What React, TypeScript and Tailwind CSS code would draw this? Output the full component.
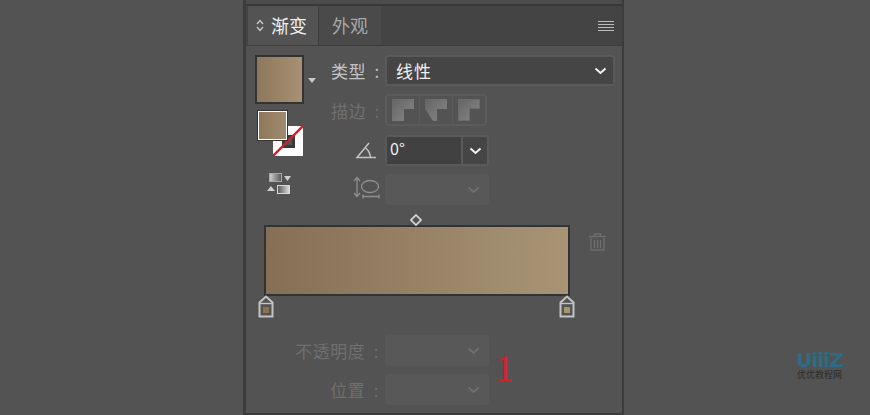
const chevron = "M1 1.5 L6 6 L11 1.5";

function Chevron({ dim }: { dim?: boolean }) {
  return (
    <svg width="13" height="8" viewBox="0 0 12 8" fill="none">
      <path d={chevron} stroke={dim ? "#6f6f6f" : "#f2f2f2"} strokeWidth="2" />
    </svg>
  );
}

function Stop({ color }: { color: string }) {
  return (
    <svg width="16" height="23" viewBox="0 0 16 23" fill="none">
      <path d="M1.5 21.5 V7.5 L8 1.5 L14.5 7.5 V21.5 Z" stroke="#c4c4c4" strokeWidth="2" fill="#535353" />
      <path d="M1.5 8.5 H14.5" stroke="#c4c4c4" strokeWidth="1.4" />
      <rect x="5" y="12" width="6" height="6" fill={color} />
    </svg>
  );
}

function JoinIcon({ kind }: { kind: number }) {
  const id = `join${kind}`;
  return (
    <svg width="28" height="24" viewBox="0 0 28 24">
      <defs>
        <linearGradient id={id} x1="0" y1="0" x2="1" y2="1">
          <stop offset="0" stopColor="#646464" />
          <stop offset="0.6" stopColor="#7a7a7a" />
          <stop offset="1" stopColor="#858585" />
        </linearGradient>
      </defs>
      {kind === 0 && <path d="M3 1 H25 V11 H15 V23 H3 Z" fill={`url(#${id})`} />}
      {kind === 1 && <path d="M3 1 H25 V11 H15 V23 H11 L3 11 Z" fill={`url(#${id})`} />}
      {kind === 2 && (
        <path d="M3.5 1.5 H24.5 V10.5 H14.5 V22.5 H3.5 Z" fill={`url(#${id})`} stroke="#6c6c6c" strokeWidth="1" />
      )}
    </svg>
  );
}

function Label({ text, dim, className }: { text: string; dim?: boolean; className?: string }) {
  return (
    <span className={`whitespace-pre text-[17px] leading-none tracking-[0.5px] ${dim ? "text-[#6f6f6f]" : "text-[#c4c4c4]"} ${className ?? ""}`}>
      {text}
    </span>
  );
}

export default function App() {
  return (
    <div className="relative flex h-[415px] w-[870px] overflow-hidden bg-[#535353] pl-[243px] font-['Noto_Sans_CJK_SC','Liberation_Sans',sans-serif]">
      <div className="flex h-full w-[381px] flex-col border-r-2 border-b-2 border-l-[3px] border-[#3c3c3c] bg-[#535353]">
        <div className="h-[6px] border-b-2 border-[#383838] bg-[#4c4c4c]" />

        {/* tabs */}
        <div className="flex h-[40px] border-b border-[#3d3d3d] bg-[#444444]">
          <div className="ml-[2px] flex w-[71px] items-center gap-[7px] border-r border-[#3d3d3d] bg-[#535353] pl-2 text-[18px] text-[#efefef]">
            <svg width="8" height="13" viewBox="0 0 8 13" fill="none" stroke="#c8c8c8" strokeWidth="1.4">
              <path d="M1 5 L4 1.5 L7 5" />
              <path d="M1 8 L4 11.5 L7 8" />
            </svg>
            <span>渐变</span>
          </div>
          <div className="flex w-[62px] items-center justify-center bg-[#4a4a4a] text-[18px] text-[#a6a6a6]">外观</div>
          <div className="ml-auto flex items-center pr-[8px]">
            <svg width="16" height="12" viewBox="0 0 16 12" stroke="#bdbdbd" strokeWidth="1">
              <path d="M0 1.5 H16 M0 4.5 H16 M0 7.5 H16 M0 10.5 H16" />
            </svg>
          </div>
        </div>

        <div className="flex pt-[9px] pl-[9px]">
          {/* swatches */}
          <div className="flex w-[76px] flex-col">
            <div className="flex items-center">
              <div className="h-[49px] w-[49px] border-2 border-[#333333] bg-gradient-to-r from-[#8d785c] to-[#a69174]" />
              <svg className="ml-[4px] mt-[1px]" width="8" height="5" viewBox="0 0 8 5">
                <path d="M0 0 H8 L4 5 Z" fill="#c8c8c8" />
              </svg>
            </div>
            <div className="relative ml-[3px] mt-[7px] h-[45px] w-[47px]">
              <div className="absolute left-[15px] top-[15px] flex h-[30px] w-[30px] items-center justify-center bg-white">
                <div className="h-[13px] w-[13px] border-[3px] border-[#3a3a3a] bg-[#535353]" />
                <svg className="absolute inset-0" width="30" height="30" viewBox="0 0 30 30">
                  <path d="M0 30 L30 0" stroke="#d0202a" strokeWidth="2.4" />
                </svg>
              </div>
              <div className="absolute left-0 top-0 h-[29px] w-[29px] border border-white bg-gradient-to-r from-[#8d785c] to-[#a08b6e] outline outline-[#333333]" />
            </div>
            <svg className="ml-[12px] mt-[16px]" width="25" height="23" viewBox="0 0 25 23">
              <defs>
                <linearGradient id="swapA" x1="0" x2="1">
                  <stop offset="0" stopColor="#d0d0d0" />
                  <stop offset="1" stopColor="#555555" />
                </linearGradient>
                <linearGradient id="swapB" x1="0" x2="1">
                  <stop offset="0" stopColor="#555555" />
                  <stop offset="1" stopColor="#e0e0e0" />
                </linearGradient>
              </defs>
              <rect x="2.5" y="1.5" width="12" height="8" fill="url(#swapA)" stroke="#a8a8a8" />
              <rect x="10.5" y="13.5" width="12" height="8" fill="url(#swapB)" stroke="#d8d8d8" />
              <path d="M17 4 H24 L20.5 9 Z M0 19 H8 L4 14 Z" fill="#cfcfcf" />
            </svg>
          </div>

          {/* controls */}
          <div className="flex flex-col">
            <div className="flex h-[31px] items-center">
              <Label text="类型  :" className="w-[54px]" />
              <div className="flex h-[31px] w-[230px] items-center rounded-[3px] border-2 border-[#5a5a5a] bg-[#454545] pr-[6px] pl-[9px] text-[17px] leading-none text-[#f0f0f0]">
                <span className="tracking-[1px]">线性</span>
                <span className="ml-auto flex">
                  <Chevron />
                </span>
              </div>
            </div>

            <div className="mt-[8px] flex h-[32px] items-center">
              <Label text="描边  :" dim className="w-[54px]" />
              <div className="flex h-[32px] w-[102px] rounded-[3px] border-2 border-[#5b5b5b]">
                <div className="flex flex-1 items-center justify-center border-r border-[#5b5b5b]">
                  <JoinIcon kind={0} />
                </div>
                <div className="flex flex-1 items-center justify-center border-r border-[#5b5b5b]">
                  <JoinIcon kind={1} />
                </div>
                <div className="flex flex-1 items-center justify-center">
                  <JoinIcon kind={2} />
                </div>
              </div>
            </div>

            <div className="mt-[9px] flex h-[31px] items-center">
              <div className="flex w-[54px] justify-end pr-[8px]">
                <svg width="22" height="17" viewBox="0 0 22 17" fill="none" stroke="#c4c4c4" strokeWidth="1.5">
                  <path d="M14 1 L2 15.5 H21" />
                  <path d="M10.5 6 Q15 9.5 15.5 15.5" />
                </svg>
              </div>
              <div className="flex h-[31px] w-[104px] rounded-[3px] border-2 border-[#5a5a5a] bg-[#454545]">
                <div className="w-[76px] border-r-2 border-[#5a5a5a] bg-[#414141] pl-[3px] pt-[1px] text-[16px] leading-[20px] text-[#eeeeee]">0°</div>
                <div className="flex flex-1 items-center justify-center">
                  <Chevron />
                </div>
              </div>
            </div>

            <div className="mt-[8px] flex h-[31px] items-center">
              <div className="mb-[4px] flex w-[54px] justify-end pr-[5px]">
                <svg width="27" height="23" viewBox="0 0 27 23" fill="none" stroke="#8f8f8f" strokeWidth="1.3">
                  <path d="M4 2 V20 M1 5 L4 1.5 L7 5 M1 17 L4 20.5 L7 17" />
                  <ellipse cx="17" cy="10.5" rx="8.5" ry="6" />
                  <path d="M10 20.5 H26 M10 18.5 V22.5 M26 18.5 V22.5" />
                </svg>
              </div>
              <div className="flex h-[31px] w-[104px] items-center justify-end rounded-[3px] bg-[#585858] pr-[9px]">
                <Chevron dim />
              </div>
            </div>
          </div>
        </div>

        {/* gradient slider */}
        <div className="relative mt-[20px] flex pl-[18px]">
          <div className="relative h-[71px] w-[306px] border-2 border-[#333333] bg-gradient-to-r from-[#857056] to-[#a89475]">
            <svg className="absolute left-[144px] top-[-13px]" width="12" height="12" viewBox="0 0 12 12" fill="none">
              <path d="M6 1 L11 6 L6 11 L1 6 Z" stroke="#dcdcdc" strokeWidth="1.6" />
            </svg>
            <div className="absolute left-[-8px] top-[68px] flex">
              <Stop color="#8b6f52" />
            </div>
            <div className="absolute right-[-7px] top-[68px] flex">
              <Stop color="#a89475" />
            </div>
          </div>
          <svg className="ml-[19px] mt-[8px]" width="17" height="18" viewBox="0 0 17 18" fill="none" stroke="#6e6e6e" strokeWidth="1.3">
            <path d="M0 3.5 H17 M5.5 3 V1 H11.5 V3 M2 5 V17 H15 V5 M5.5 7 V15 M8.5 7 V15 M11.5 7 V15" />
          </svg>
        </div>

        {/* opacity + location */}
        <div className="mt-[39px] flex flex-col items-start gap-[8px] pl-[98px]">
          <div className="flex h-[31px] items-center">
            <div className="flex w-[41px] justify-end">
              <Label text="不透明度  :" dim className="mr-[6px]" />
            </div>
            <div className="flex h-[31px] w-[104px] items-center justify-end rounded-[3px] bg-[#585858] pr-[9px]">
              <Chevron dim />
            </div>
          </div>
          <div className="flex h-[31px] items-center">
            <div className="flex w-[41px] justify-end">
              <Label text="位置  :" dim className="mr-[6px]" />
            </div>
            <div className="flex h-[31px] w-[104px] items-center justify-end rounded-[3px] bg-[#585858] pr-[9px]">
              <Chevron dim />
            </div>
          </div>
        </div>
      </div>

      {/* handwritten step number */}
      <span className="absolute left-[495px] top-[346px] font-['Liberation_Serif',serif] text-[38px] leading-[44px] text-[#d2232a]">1</span>

      {/* watermark */}
      <div className="absolute left-[796px] top-[351px] flex w-[47px] flex-col items-center">
        <span className="font-['DejaVu_Sans',sans-serif] text-[20px] font-bold leading-[18px] tracking-[-1px] text-[#2f6b85]">UiiiZ</span>
        <span className="whitespace-nowrap text-[9px] leading-[11px] text-[#2b2b2b]">优优教程网</span>
      </div>
    </div>
  );
}
